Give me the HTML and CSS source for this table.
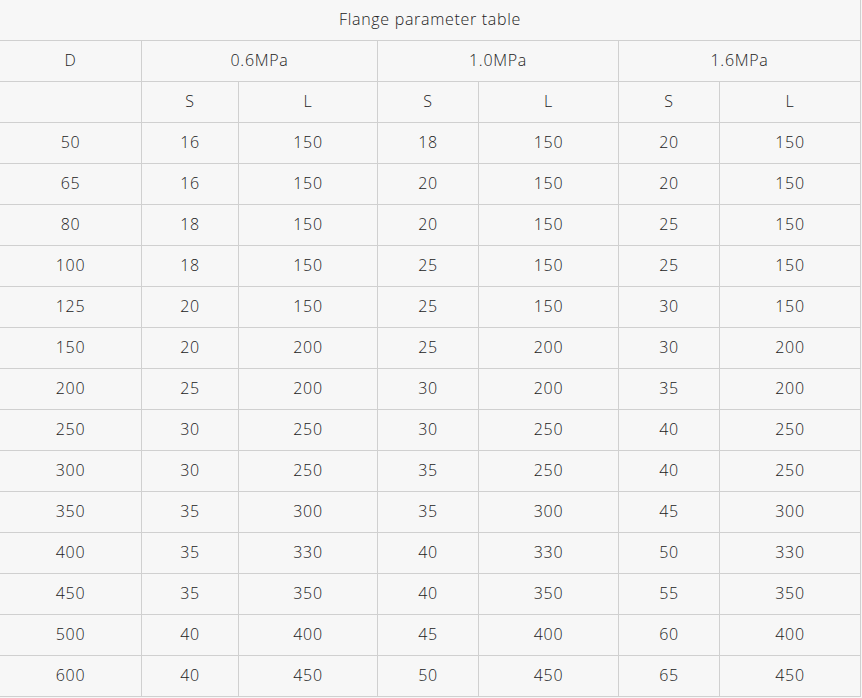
FILE: index.html
```html
<!DOCTYPE html>
<html>
<head>
<meta charset="utf-8">
<link rel="stylesheet" href="styles.css">
</head>
<body>
<div class="tbl">
  <div class="c title">Flange parameter table</div>
  <div class="c">D</div>
  <div class="c span2">0.6MPa</div>
  <div class="c span2">1.0MPa</div>
  <div class="c span2">1.6MPa</div>
  <div class="c"></div>
  <div class="c">S</div><div class="c">L</div>
  <div class="c">S</div><div class="c">L</div>
  <div class="c">S</div><div class="c">L</div>

  <div class="c">50</div><div class="c">16</div><div class="c">150</div><div class="c">18</div><div class="c">150</div><div class="c">20</div><div class="c">150</div>
  <div class="c">65</div><div class="c">16</div><div class="c">150</div><div class="c">20</div><div class="c">150</div><div class="c">20</div><div class="c">150</div>
  <div class="c">80</div><div class="c">18</div><div class="c">150</div><div class="c">20</div><div class="c">150</div><div class="c">25</div><div class="c">150</div>
  <div class="c">100</div><div class="c">18</div><div class="c">150</div><div class="c">25</div><div class="c">150</div><div class="c">25</div><div class="c">150</div>
  <div class="c">125</div><div class="c">20</div><div class="c">150</div><div class="c">25</div><div class="c">150</div><div class="c">30</div><div class="c">150</div>
  <div class="c">150</div><div class="c">20</div><div class="c">200</div><div class="c">25</div><div class="c">200</div><div class="c">30</div><div class="c">200</div>
  <div class="c">200</div><div class="c">25</div><div class="c">200</div><div class="c">30</div><div class="c">200</div><div class="c">35</div><div class="c">200</div>
  <div class="c">250</div><div class="c">30</div><div class="c">250</div><div class="c">30</div><div class="c">250</div><div class="c">40</div><div class="c">250</div>
  <div class="c">300</div><div class="c">30</div><div class="c">250</div><div class="c">35</div><div class="c">250</div><div class="c">40</div><div class="c">250</div>
  <div class="c">350</div><div class="c">35</div><div class="c">300</div><div class="c">35</div><div class="c">300</div><div class="c">45</div><div class="c">300</div>
  <div class="c">400</div><div class="c">35</div><div class="c">330</div><div class="c">40</div><div class="c">330</div><div class="c">50</div><div class="c">330</div>
  <div class="c">450</div><div class="c">35</div><div class="c">350</div><div class="c">40</div><div class="c">350</div><div class="c">55</div><div class="c">350</div>
  <div class="c">500</div><div class="c">40</div><div class="c">400</div><div class="c">45</div><div class="c">400</div><div class="c">60</div><div class="c">400</div>
  <div class="c">600</div><div class="c">40</div><div class="c">450</div><div class="c">50</div><div class="c">450</div><div class="c">65</div><div class="c">450</div>
</div>
</body>
</html>
```
FILE: styles.css
```css
html, body {
  margin: 0;
  padding: 0;
  background: #f7f7f7;
}
.tbl {
  display: grid;
  grid-template-columns: 141px 96px 138px 100px 139px 100px 140px;
  grid-auto-rows: 40px;
  gap: 1px;
  width: 860px;
  padding: 0 1px 1px 0;
  background: #d0d0d0;
  font-family: "Open Sans", sans-serif;
  font-weight: 300;
  font-size: 16px;
  letter-spacing: 0.7px;
  color: #222;
}
.c {
  background: #f7f7f7;
  display: flex;
  align-items: center;
  justify-content: center;
  padding-bottom: 2px;
  box-sizing: border-box;
}
.title {
  grid-column: 1 / -1;
}
.span2 {
  grid-column: span 2;
}
```
